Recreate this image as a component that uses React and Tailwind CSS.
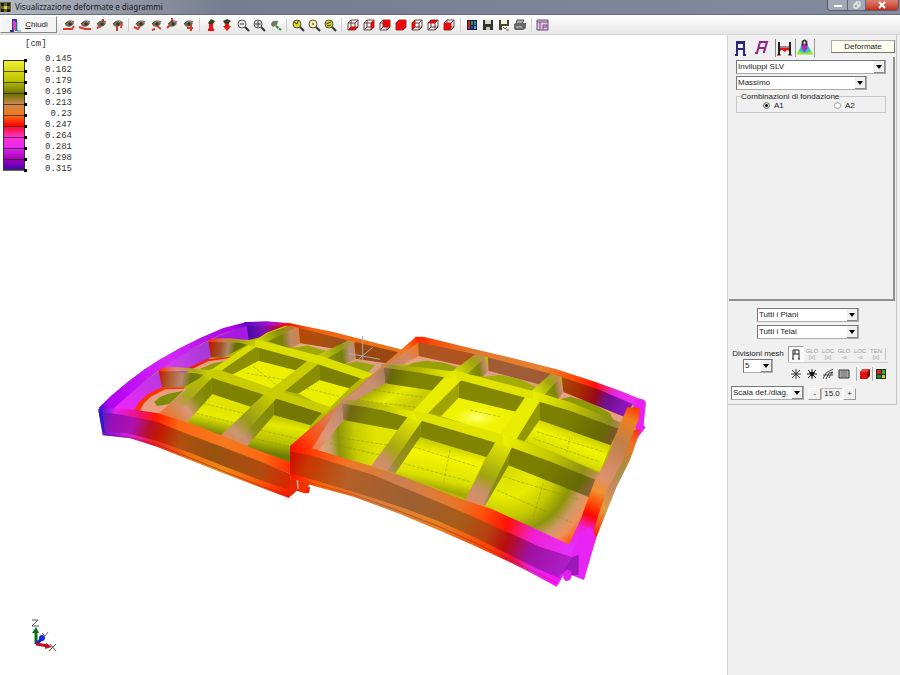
import { useState } from 'react'

const LEGEND = ['0.145', '0.162', '0.179', '0.196', '0.213', '0.23', '0.247', '0.264', '0.281', '0.298', '0.315']

// id, x1, y1, x2, y2, [offset, color]...
const LEFT_GRADIENTS = [
  ['l-edge', 55, 325, 500, 68, [0, '#4a10c8'], [0.07, '#b000f0'], [0.5, '#d428f8'], [0.92, '#a800e8'], [1, '#5a08d0']],
  ['l-front', 60, 350, 630, 530, [0, '#5020c0'], [0.06, '#9410b8'], [0.17, '#b010b0'], [0.25, '#b81030'], [0.31, '#c41800'], [0.42, '#b05010'], [0.6, '#985210'], [0.85, '#b04c10'], [1, '#d82800']],
  ['l-rim', 60, 325, 640, 490, [0, '#4010d8'], [0.08, '#e020f0'], [0.2, '#f01070'], [0.28, '#ff1800'], [0.4, '#ff6810'], [0.65, '#f47a20'], [0.85, '#ff6810'], [1, '#ff2a00']],
  ['l-flange', 60, 400, 630, 590, [0, '#6010e0'], [0.15, '#e020e0'], [0.27, '#f02020'], [0.45, '#f07010'], [0.65, '#f08818'], [0.85, '#ff5008'], [1, '#ff1800']],
  ['l-back', 500, 68, 990, 160, [0, '#6008d0'], [0.15, '#b010d0'], [0.25, '#ff1000'], [0.38, '#f06010'], [1, '#f07818']],
  ['l-d1', 385, 118, 560, 130, [0, '#ff2800'], [0.25, '#d07840'], [0.5, '#a0a010'], [1, '#e4e800']],
  ['l-d2', 235, 205, 410, 215, [0, '#ff2800'], [0.3, '#d89068'], [0.6, '#a8a810'], [1, '#dce000']],
  ['l-w1', 385, 130, 510, 150, [0, '#b81800'], [0.3, '#a05028'], [0.48, '#b08868'], [0.65, '#687000'], [1, '#707800']],
  ['l-w2', 235, 220, 375, 245, [0, '#c01800'], [0.2, '#b05020'], [0.5, '#b88870'], [0.7, '#707808'], [1, '#808400']],
  ['l-u1', 240, 345, 400, 220, [0, '#f07028'], [0.3, '#d09060'], [0.5, '#a8a820'], [0.85, '#b8bc00'], [1, '#d8dc00']],
  ['l-u2', 430, 410, 570, 285, [0, '#e08858'], [0.2, '#c89870'], [0.45, '#989a18'], [1, '#c8cc00']],
  ['l-u1b', 530, 130, 640, 78, [0, '#d8dc00'], [0.6, '#889008'], [1, '#c07838']],
  ['l-u2b', 700, 185, 825, 122, [0, '#e0e400'], [0.65, '#909810'], [1, '#c89068']],
  ['l-f', 400, 310, 380, 400, [0, '#e0e400'], [0.4, '#e8ec00'], [1, '#6e7c08']],
  ['l-f2', 590, 340, 570, 460, [0, '#b8bc00'], [0.3, '#e4e800'], [0.7, '#b8c000'], [1, '#6e7c08']],
  ['l-mag', 240, 200, 380, 160, [0, '#d840f0'], [1, '#a838d8']],
  ['l-mag2', 130, 310, 240, 230, [0, '#e828f8'], [1, '#b838e0']],
  ['l-lw1', 270, 340, 390, 260, [0, '#e07838'], [0.35, '#d89878'], [0.62, '#8c9010'], [1, '#7e8400']],
  ['l-lw2', 440, 400, 575, 330, [0, '#e08858'], [0.3, '#c89078'], [0.5, '#8c9010'], [1, '#848a08']],
  ['l-bw', 505, 90, 620, 80, [0, '#4808a8'], [0.4, '#8010b0'], [0.75, '#b80840'], [1, '#c81000']],
  ['l-bw2', 655, 100, 800, 130, [0, '#b84808'], [0.5, '#a85010'], [1, '#98501c']],
  ['l-p1', 570, 120, 660, 110, [0, '#808808'], [0.4, '#788008'], [0.7, '#c08868'], [1, '#d08050']],
  ['l-p2', 740, 160, 830, 150, [0, '#889008'], [0.5, '#788008'], [0.75, '#b89078'], [1, '#c88860']],
]

const RIGHT_GRADIENTS = [
  ['r-left', 60, 380, 440, 52, [0, '#ff1000'], [0.12, '#ff4810'], [0.3, '#d88050'], [0.7, '#cc8458'], [0.9, '#f07820'], [1, '#ff3000']],
  ['r-front', 60, 420, 905, 740, [0, '#d01000'], [0.06, '#c83800'], [0.2, '#b46028'], [0.42, '#9c6034'], [0.6, '#a85c18'], [0.7, '#b84010'], [0.77, '#b80c10'], [0.85, '#a010a0'], [1, '#b020d0']],
  ['r-rim', 60, 385, 905, 690, [0, '#ff1000'], [0.08, '#ff4000'], [0.2, '#f07828'], [0.38, '#cc8050'], [0.58, '#e87828'], [0.68, '#ff5008'], [0.77, '#ff1008'], [0.86, '#f020d0'], [1, '#e830ff']],
  ['r-flange', 60, 470, 860, 790, [0, '#ff1000'], [0.1, '#ff6000'], [0.3, '#d88040'], [0.55, '#e88020'], [0.74, '#ff4000'], [0.82, '#f01030'], [0.9, '#e820e0'], [1, '#ff10ff']],
  ['r-back', 440, 50, 1125, 240, [0, '#ff2000'], [0.08, '#f85008'], [0.25, '#e07830'], [0.55, '#e88030'], [0.68, '#ff5008'], [0.78, '#ff1008'], [0.87, '#e828e0'], [1, '#f030ff']],
  ['r-right', 1105, 260, 920, 690, [0, '#ff3000'], [0.1, '#f08020'], [0.25, '#c08048'], [0.5, '#dc9070'], [0.6, '#f09030'], [0.68, '#ff5008'], [0.76, '#ff0800'], [0.85, '#f020d0'], [1, '#e030ff']],
  ['r-side', 1110, 320, 940, 740, [0, '#ff2000'], [0.12, '#f07020'], [0.3, '#a89040'], [0.45, '#c88860'], [0.6, '#e0a040'], [0.72, '#f05010'], [0.8, '#ff1010'], [0.88, '#f020e0'], [1, '#e020e8']],
  ['r-d1', 335, 135, 560, 165, [0, '#b88868'], [0.15, '#989820'], [0.5, '#b8bc00'], [1, '#ecf000']],
  ['r-d1b', 790, 225, 1060, 320, [0, '#ecf000'], [0.5, '#b8bc00'], [0.85, '#8c8c20'], [1, '#c08058']],
  ['r-d2', 210, 240, 440, 285, [0, '#cc9070'], [0.2, '#a09828'], [0.5, '#c0c400'], [1, '#ecf000']],
  ['r-d2b', 700, 360, 995, 480, [0, '#ecf000'], [0.5, '#c0c400'], [0.8, '#909010'], [1, '#d09068']],
  ['r-u1', 320, 445, 440, 290, [0, '#d89070'], [0.18, '#c89060'], [0.4, '#a8a810'], [1, '#e8ec00']],
  ['r-u2', 610, 550, 710, 365, [0, '#dc8c68'], [0.22, '#c89068'], [0.42, '#a0a410'], [1, '#e8ec00']],
  ['r-u1b', 555, 165, 645, 100, [0, '#e0e400'], [0.6, '#a0a410'], [1, '#c88858']],
  ['r-u2b', 790, 225, 870, 160, [0, '#e8ec00'], [0.6, '#a0a410'], [1, '#c88858']],
  ['r-m1', 340, 160, 420, 180, [0, '#906850'], [0.3, '#686808'], [1, '#7e8400']],
  ['r-f1', 215, 270, 300, 290, [0, '#a87860'], [0.3, '#706810'], [1, '#7e8400']],
  ['r-m3', 900, 270, 1045, 340, [0, '#7c8000'], [0.7, '#666a04'], [1, '#7c5430']],
  ['r-f3', 830, 420, 975, 510, [0, '#7c7e00'], [0.7, '#666a04'], [1, '#946048']],
  ['r-lf1', 125, 390, 215, 260, [0, '#f07848'], [0.4, '#dc9878'], [1, '#b88870']],
  ['r-lf2', 350, 450, 450, 320, [0, '#b88870'], [0.22, '#989020'], [1, '#848a04']],
  ['r-lf3', 640, 550, 718, 400, [0, '#b88870'], [0.25, '#8c8c18'], [1, '#848a04']],
  ['r-lm1', 245, 240, 345, 160, [0, '#cc9070'], [0.6, '#c89070'], [1, '#a88060']],
  ['r-bb3', 870, 180, 1090, 260, [0, '#a84c10'], [0.3, '#a82800'], [0.5, '#98081c'], [0.65, '#701090'], [1, '#9818c8']],
  ['r-floor1', 145, 375, 320, 360, [0, '#e8a080'], [0.2, '#c8a070'], [0.35, '#8c9408'], [0.65, '#c8cc00'], [1, '#e0e400']],
  ['r-floor2', 500, 350, 470, 500, [0, '#b8bc00'], [0.35, '#f4f600'], [0.8, '#dce000'], [1, '#a4ac00']],
  ['r-floorm1', 340, 190, 390, 270, [0, '#a8ac00'], [0.5, '#e8ec00'], [1, '#c8cc00']],
  ['r-floorm3', 900, 320, 860, 420, [0, '#c4c800'], [0.4, '#f0f400'], [0.8, '#d8dc00'], [1, '#b0b400']],
  ['r-peach', 440, 60, 360, 140, [0, '#f87010'], [0.5, '#d88860'], [1, '#c08868']],
  ['r-b1', 600, 140, 650, 130, [0, '#8c9408'], [0.5, '#7c8408'], [0.85, '#c08868'], [1, '#d09078']],
  ['r-b2', 825, 200, 875, 190, [0, '#8c9408'], [0.5, '#7c8408'], [0.85, '#c08868'], [1, '#d09078']],
]

// [points, fill], painted back to front
const LEFT_FACES = [
  ['55,325 150,240 300,145 420,90 500,68 630,70 990,155 990,300 625,500 200,365', '#b4b800'],
  ['80,328 170,262 310,160 425,102 506,76 508,118 390,174 246,264 165,332', 'url(#l-mag2)'],
  // rear row
  ['395,118 500,76 508,118 450,122', '#a818e0'],
  ['500,76 632,73 565,106 506,120', 'url(#l-bw)'],
  ['655,78 805,120 765,147 660,131', 'url(#l-bw2)'],
  ['640,140 662,130 768,147 735,165', '#e8a888'],
  ['632,146 680,136 738,152 715,170', '#a0a808'],
  ['560,122 655,78 660,130 628,146', 'url(#l-p1)'],
  ['820,122 990,160 990,220 826,178', '#984810'],
  ['780,196 828,176 990,200 990,240 850,216', '#d8a080'],
  ['780,196 830,184 885,196 860,222', '#9aa410'],
  ['732,172 822,122 828,176 785,196', 'url(#l-p2)'],
  // middle row
  ['232,208 385,122 394,172 330,204', 'url(#l-mag)'],
  ['325,204 380,178 455,170 390,214', '#f02000'],
  ['338,206 384,184 450,174 390,218', '#e8a080'],
  ['352,210 400,190 440,182 385,220', '#90980c'],
  ['385,124 512,128 430,174 393,172', 'url(#l-w1)'],
  ['455,224 536,182 655,211 582,276', '#ecf000'],
  ['538,136 692,176 652,212 536,182', '#808400'],
  ['538,136 536,182 455,225 412,212', '#8c9000'],
  ['655,280 718,240 808,264 745,328', '#eaee00'],
  ['717,188 846,232 808,265 718,240', '#7c8000'],
  ['717,188 718,241 655,281 602,270', '#8a8e00'],
  // front row
  ['162,332 176,308 200,285 226,270 250,262 315,262 238,350', '#ff3000'],
  ['180,332 192,310 212,290 256,268 320,266 244,350', '#e8a080'],
  ['222,306 240,292 262,282 310,272 268,312 232,318', '#808c08'],
  ['236,212 380,222 312,262 246,262', 'url(#l-w2)'],
  ['310,360 396,282 512,320 425,412', 'url(#l-f)'],
  ['390,226 552,284 512,320 397,282', '#7e8200'],
  ['390,226 397,283 322,366 262,350', 'url(#l-lw1)'],
  ['490,440 580,344 692,376 640,490', 'url(#l-f2)'],
  ['580,288 730,334 692,376 581,345', '#747800'],
  ['580,288 581,346 500,440 462,420', 'url(#l-lw2)'],
  // rib tops
  ['230,346 274,356 404,226 540,132 648,84 630,72 560,98 505,135 370,225', 'url(#l-u1)'],
  ['505,136 545,132 648,84 630,76 562,100', 'url(#l-u1b)'],
  ['420,408 468,428 594,290 722,186 690,176 552,284', 'url(#l-u2)'],
  ['690,178 726,184 832,124 812,118 745,150', 'url(#l-u2b)'],
  ['385,116 450,115 540,124 530,142 480,128 388,126', 'url(#l-d1)'],
  ['525,122 545,122 735,172 880,222 850,238 700,188 525,140', '#dce000'],
  ['232,202 300,202 412,212 395,232 330,214 236,214', 'url(#l-d2)'],
  ['390,208 420,210 600,274 755,322 735,342 575,292 385,230', '#c8cc00'],
  // rims
  ['55,325 95,286 140,248 190,210 240,178 300,144 360,114 430,84 500,66 512,74 425,102 370,128 310,162 230,216 170,264 100,326', 'url(#l-edge)'],
  ['492,66 560,64 630,70 760,96 990,155 990,165 800,120 632,78 500,76', 'url(#l-back)'],
  ['55,328 65,322 170,330 235,340 330,370 425,406 510,442 640,490 640,525 530,482 430,444 330,407 230,367 130,347 62,340', 'url(#l-rim)'],
  ['55,332 65,337 130,345 230,365 330,405 430,442 530,480 632,522 632,574 530,540 430,502 330,462 230,424 140,404 68,396', 'url(#l-front)'],
  ['66,394 140,400 230,422 330,458 430,498 530,536 632,572 640,570 690,560 688,578 676,580 650,572 626,594 530,558 430,520 330,480 230,440 150,415 68,406', 'url(#l-flange)'],
  ['68,402 150,410 230,433 330,472 430,512 530,551 626,586 626,589 530,554 430,515 330,475 230,436 150,413 68,405', '#7a1c1880'],
  ['55,328 68,336 74,398 66,394 60,360', '#3018c8'],
]

const RIGHT_FACES = [
  ['60,380 440,52 1125,240 905,700 300,500', '#b8bc00'],
  // rear row
  ['345,136 444,70 446,110 400,134', 'url(#r-peach)'],
  ['400,132 446,108 572,134 545,160', '#e8a080'],
  ['405,140 430,128 470,122 520,128 560,140 545,166', '#98a008'],
  ['444,62 618,102 572,136 446,108', '#ae5420'],
  ['638,168 656,150 812,192 790,222', '#dca080'],
  ['638,172 690,164 750,178 800,202 785,226', '#a4ac08'],
  ['654,104 848,158 812,194 655,152', '#a05c34'],
  ['580,162 642,104 656,152 638,170', 'url(#r-b1)'],
  ['862,238 880,214 1064,292 1045,322', '#e8a080'],
  ['862,240 900,230 960,246 1020,280 1040,322', '#8c9808'],
  ['874,166 1096,242 1062,290 880,216', 'url(#r-bb3)'],
  ['812,228 868,164 880,216 864,240', 'url(#r-b2)'],
  // middle row
  ['240,246 345,190 492,212 442,284', 'url(#r-floorm1)'],
  ['340,138 532,168 492,212 345,190', 'url(#r-m1)'],
  ['340,138 346,190 250,246 216,242', 'url(#r-lm1)'],
  ['512,288 565,232 742,276 706,350', '#eef200'],
  ['568,174 780,230 742,276 565,233', '#848800'],
  ['568,174 565,234 514,288 474,278', '#a0a400'],
  ['762,364 808,298 1022,374 990,456', 'url(#r-floorm3)'],
  ['808,238 1048,322 1022,376 808,300', 'url(#r-m3)'],
  ['808,238 808,301 764,364 730,352', '#949800'],
  // front row
  ['130,390 220,300 382,330 312,440', 'url(#r-floor1)'],
  ['214,246 420,288 382,330 220,300', 'url(#r-f1)'],
  ['214,246 220,301 145,392 95,392', 'url(#r-lf1)'],
  ['374,460 450,350 648,410 588,536', 'url(#r-floor2)'],
  ['454,292 688,358 648,411 450,351', '#808400'],
  ['454,292 450,352 376,460 346,452', 'url(#r-lf2)'],
  ['642,562 716,434 958,530 897,680', 'url(#r-floor3)'],
  ['722,372 992,482 958,532 715,436', 'url(#r-f3)'],
  ['722,372 716,436 645,558 628,552', 'url(#r-lf3)'],
  // rib tops
  ['303,438 352,452 466,288 590,164 534,160 412,292', 'url(#r-u1)'],
  ['536,162 590,164 656,102 624,98', 'url(#r-u1b)'],
  ['584,542 636,562 734,366 818,230 772,222 680,358', 'url(#r-u2)'],
  ['772,224 818,230 880,162 848,156', 'url(#r-u2b)'],
  ['332,132 450,142 580,158 565,180 450,158 336,142', 'url(#r-d1)'],
  ['550,154 580,158 815,220 800,242 560,178', '#e0e400'],
  ['790,214 900,246 1054,308 1046,326 900,272 790,240', 'url(#r-d1b)'],
  ['208,236 330,250 460,282 440,300 330,268 212,250', 'url(#r-d2)'],
  ['430,274 470,280 730,352 710,378 440,298', '#e0e400'],
  ['700,344 850,396 1002,466 992,486 850,428 700,374', 'url(#r-d2b)'],
  // rims
  ['60,378 436,52 448,66 345,140 214,246 118,398 60,394', 'url(#r-left)'],
  ['434,50 460,50 600,84 730,115 860,148 970,184 1050,212 1118,240 1096,256 990,210 860,166 630,106 444,66', 'url(#r-back)'],
  ['1092,240 1118,238 1128,247 1121,316 1127,322 1104,352 1085,290', '#e820f0'],
  ['1090,330 1108,326 1104,352 1080,420 1040,500 980,650 942,776 920,770 960,600', 'url(#r-side)'],
  ['1072,262 1110,264 1106,300 1085,350 1050,440 1015,500 985,585 955,690 900,700 895,678 935,590 975,480 1010,420 1035,350', 'url(#r-right)'],
  ['60,380 135,388 300,437 400,470 510,512 590,543 660,565 760,610 900,675 912,716 810,682 710,637 610,592 510,552 310,474 60,402', 'url(#r-rim)'],
  ['60,394 120,406 310,465 510,548 610,590 710,635 810,680 908,712 900,750 865,780 810,757 710,707 610,657 510,610 390,566 250,520 110,482 60,464', 'url(#r-front)'],
  ['60,460 110,474 250,515 390,560 510,605 610,650 710,700 810,750 872,776 860,800 785,760 710,722 610,676 510,632 390,582 250,530 110,492 62,474', 'url(#r-flange)'],
  ['110,484 250,523 390,572 510,619 610,664 710,712 862,788 862,791 710,716 610,668 510,623 390,576 250,526 110,487', '#8a302070'],
  ['905,700 935,640 960,620 978,650 942,780 906,766 900,780 886,784 880,766 862,798 872,764 900,745', '#e824f4'],
  ['905,712 926,704 926,764 905,766 892,750 876,760', '#9c18b8'],
  ['880,758 890,750 904,752 904,772 890,782 880,776', '#e020f0'],
  ['62,472 80,480 84,512 72,512 72,520 58,528 50,520', '#e82800'],
  ['84,482 118,492 104,520 86,512', '#f03000'],
]

function Gradients({ list }) {
  return list.map(([id, x1, y1, x2, y2, ...stops]) => (
    <linearGradient key={id} id={id} gradientUnits="userSpaceOnUse" x1={x1} y1={y1} x2={x2} y2={y2}>
      {stops.map(([offset, color]) => <stop key={offset} offset={offset} stopColor={color} />)}
    </linearGradient>
  ))
}

function Faces({ list }) {
  return list.map(([points, fill], i) => <polygon key={i} points={points} fill={fill} />)
}

function SlabModel() {
  return (
    <svg viewBox="90 312 566 284" className="ml-[90px] w-[566px] shrink-0" role="img" aria-label="Platea deformata">
      <defs>
        <Gradients list={LEFT_GRADIENTS} />
        <Gradients list={RIGHT_GRADIENTS} />
        <radialGradient id="glow">
          <stop offset="0" stopColor="#ffff80" />
          <stop offset="1" stopColor="#ffff30" stopOpacity="0" />
        </radialGradient>
        {/* yellow centre fading to the hot corner */}
        <radialGradient id="r-floor3" gradientUnits="userSpaceOnUse" cx="710" cy="440" r="300">
          <stop offset="0" stopColor="#d8dc00" />
          <stop offset="0.3" stopColor="#e8ec00" />
          <stop offset="0.5" stopColor="#c4c800" />
          <stop offset="0.66" stopColor="#8c9408" />
          <stop offset="0.78" stopColor="#d09868" />
          <stop offset="0.88" stopColor="#f09058" />
          <stop offset="1" stopColor="#ff5008" />
        </radialGradient>
      </defs>
      <g transform="translate(80 300) scale(0.33333)">
        <Faces list={LEFT_FACES} />
        <g fill="none" stroke="#8c9000" strokeWidth="1.5" strokeDasharray="9 4">
          <path d="M350 340 470 370M370 310 490 340M500 220 620 240M520 200 590 255M680 265 780 290M540 390 670 420M520 415 650 445" />
        </g>
        <path d="M848 108V180M805 160 900 178M878 142 835 178" stroke="#a8a8a8" strokeWidth="3" fill="none" />
      </g>
      <g transform="translate(270 320) scale(0.33333)">
        <Faces list={RIGHT_FACES} />
        <ellipse cx="620" cy="292" rx="75" ry="34" fill="url(#glow)" />
        <g fill="none" stroke="#8c9000" strokeWidth="1.5" strokeDasharray="10 4">
          <path d="M190 350 350 375M180 370 330 405M260 240 440 262M310 210 460 232M600 270 690 290M430 380 620 440M400 430 600 485M800 335 1000 395M790 355 985 425M700 470 930 540M680 510 910 610" />
          <path d="M540 390 520 490M820 490 790 590M900 350 890 400" />
        </g>
      </g>
    </svg>
  )
}

function AxisTriad() {
  return (
    <svg viewBox="0 0 32 36" className="mb-[21px] ml-7 w-8 shrink-0" fill="none" aria-hidden="true">
      <path d="M4 2H10L4 8H11" stroke="#555" />
      <path d="M8 26V13" stroke="#087018" strokeWidth="3" />
      <path d="M4 15 8 9 11 15Z" fill="#087018" />
      <path d="M8 26 15 20" stroke="#1020d0" strokeWidth="3" />
      <circle cx="14" cy="20" r="3" fill="#1828e8" />
      <path d="M14 15 17 18 20 14" stroke="#777" />
      <path d="M8 26 20 28" stroke="#c01020" strokeWidth="3" />
      <path d="M18 25 24 29 17 31Z" fill="#c01020" />
      <path d="M22 26 28 33M28 26 21 33" stroke="#555" />
    </svg>
  )
}

function ColorLegend() {
  return (
    <div className="flex shrink-0 flex-col gap-1 pt-1 pl-[3px] font-['Liberation_Mono',monospace] text-[9px] leading-[11px] text-[#333]">
      <div className="pl-[22px]">[cm]</div>
      <div className="flex">
        <svg viewBox="0 0 26 114" className="mt-1 h-[114px] w-[26px]" aria-hidden="true">
          <defs>
            <linearGradient id="scale" x1="0" y1="0" x2="0" y2="1">
              <stop offset="0" stopColor="#f0f030" />
              <stop offset="0.18" stopColor="#c0c400" />
              <stop offset="0.31" stopColor="#6c7000" />
              <stop offset="0.4" stopColor="#d08850" />
              <stop offset="0.5" stopColor="#f07818" />
              <stop offset="0.59" stopColor="#ff0800" />
              <stop offset="0.7" stopColor="#ff30d0" />
              <stop offset="0.79" stopColor="#e828f0" />
              <stop offset="0.9" stopColor="#a800b8" />
              <stop offset="1" stopColor="#4800b8" />
            </linearGradient>
          </defs>
          <rect x="0.5" y="2.5" width="21" height="109" fill="url(#scale)" stroke="#333" />
          {LEGEND.map((v, i) => (
            <g key={v}>
              <path d={`M0 ${2.5 + i * 11}H22`} stroke="#222" strokeOpacity="0.7" />
              <rect x="21" y={1 + i * 11} width="3" height="3" fill="#000" />
            </g>
          ))}
        </svg>
        <ul className="w-[43px] text-right">
          {LEGEND.map((v) => <li key={v}>{v}</li>)}
        </ul>
      </div>
    </div>
  )
}

function Eye({ red }) {
  return (
    <>
      <path d={red} stroke="#e03828" strokeWidth="2" fill="none" />
      <path d="M4 6C7 3 10 3 13 5C12 8 8 10 5 8Z" fill="#7c6450" />
      <path d="M4 6C6 3 10 2 13 4" stroke="#4c4434" fill="none" />
      <circle cx="9" cy="6" r="1.5" fill="#203828" />
    </>
  )
}

function Magnifier({ fill, mark }) {
  return (
    <>
      <circle cx="7" cy="6" r="4" fill={fill} stroke="#555" />
      <path d="M10 9 14 13" stroke="#333" strokeWidth="2" />
      <path d={mark} stroke="#333" fill="none" />
    </>
  )
}

function Cube({ face }) {
  return (
    <>
      <path d="M3 5H10V12H3ZM3 5 6 2H13L10 5M13 2V9L10 12M6 2V9H13M6 9 3 12" stroke="#6a4444" fill="none" />
      <path d={face} fill="#e80808" />
    </>
  )
}

const TOOL_GROUPS = [
  [
    ['Vista 1', <Eye red="M2 11H11L13 8" />],
    ['Vista 2', <Eye red="M2 9 8 11H14" />],
    ['Vista 3', <Eye red="M10 1V5M4 10 8 8" />],
    ['Vista 4', <Eye red="M8 8V13M13 4 12 10" />],
  ],
  [
    ['Ruota 1', <Eye red="M2 9 6 11 8 8" />],
    ['Ruota 2', <Eye red="M9 8 13 11M4 12 7 11" />],
    ['Ruota 3', <Eye red="M8 0V4M3 10 6 7" />],
    ['Ruota 4', <Eye red="M11 7V13M7 10H13" />],
  ],
  [
    ['Alza', <><path d="M5 13H11V11L10 10V5H6V10L5 11Z" fill="#f01010" /><path d="M5 5 8 1 12 3 10 6H6Z" fill="#413c28" /></>],
    ['Abbassa', <><path d="M6 4H10V8H12L8 13 4 8H6Z" fill="#f01010" /><path d="M4 3 8 1 12 3 9 6H6Z" fill="#413c28" /></>],
    ['Zoom indietro', <Magnifier fill="#eee" mark="M5 6H9" />],
    ['Zoom avanti', <Magnifier fill="#eee" mark="M4 6H10M7 3V9" />],
    ['Sposta', <><path d="M4 7C4 3 7 2 11 3L10 7 6 9Z" fill="#658058" /><path d="M9 8 14 12" stroke="#208838" strokeWidth="2" strokeDasharray="3 1" /></>],
  ],
  [
    ['Zoom finestra', <Magnifier fill="#d8e010" mark="M4 4 7 6 8 3" />],
    ['Zoom precedente', <Magnifier fill="#f4f4a0" mark="M6 6H8" />],
    ['Zoom tutto', <Magnifier fill="#d8e010" mark="M4 6 9 4M5 8 9 7" />],
  ],
  [
    ['Faccia inferiore', <Cube face="M3 12 6 9H13L10 12Z" />],
    ['Faccia destra', <Cube face="M10 5 13 2V9L10 12Z" />],
    ['Faccia posteriore', <Cube face="M6 2H13V9H6Z" />],
    ['Solido', <Cube face="M3 5 6 2H13V9L10 12H3Z" />],
    ['Faccia sinistra', <Cube face="M3 5 6 2V9L3 12Z" />],
    ['Faccia superiore', <Cube face="M3 5 6 2H13L10 5Z" />],
    ['Faccia anteriore', <Cube face="M3 5H10V12H3Z" />],
  ],
  [
    ['Colori', <><path d="M3 2H13V12H3Z" fill="#181838" /><path d="M4 3H6V11H4Z" fill="#d02828" /><path d="M7 3H9V7H7Z" fill="#20a040" /><path d="M10 3H12V7H10Z" fill="#2880e0" /><path d="M7 8H9V11H7Z" fill="#3038c0" /><path d="M10 8H12V11H10Z" fill="#38b8c8" /></>],
    ['Salva', <><path d="M3 2H13V12H3Z" fill="#303428" /><path d="M5 2H11V6H5Z" fill="#d8dcc8" /><path d="M6 9H10V12H6Z" fill="#c8c8c8" /></>],
    ['Esporta', <><path d="M3 2H13V12H3Z" fill="#484430" /><path d="M5 2H11V6H5Z" fill="#f4f4e0" /><path d="M6 8H14V13H6Z" fill="#f0f0f0" /><path d="M7 9 9 11 11 9M10 12H13" stroke="#605840" fill="none" /></>],
    ['Stampa', <><path d="M5 2H12L10 6H4Z" fill="#aaa" stroke="#555" /><path d="M2 6 4 5H14V10L11 12H3L2 10Z" fill="#666" /><path d="M4 9H10" stroke="#ddd" /></>],
  ],
  [
    ['Proprietà', <><path d="M2 2H13V12H2Z" fill="#dcc8e0" stroke="#684870" /><path d="M2 4H13M5 4V12M8 12V7H12V9H8" stroke="#804888" fill="none" /></>],
  ],
]

function Toolbar() {
  return (
    <div className="flex h-5 items-center border-b border-[#d8d8d8] bg-gradient-to-b from-white to-[#e6e6e6]">
      <button className="flex h-[17px] w-[57px] items-center justify-center gap-1 border border-t-white border-r-[#888] border-b-[#888] border-l-white bg-[#f4f4f4] text-[8px]">
        <svg viewBox="0 0 12 14" className="w-3" fill="none" aria-hidden="true">
          <path d="M1 13H4V2H7V13" stroke="#2838a0" strokeWidth="2" />
          <path d="M4 2 7 4V13L4 11Z" fill="#e040b0" />
          <path d="M8 4V13H12" stroke="#20a8b0" />
        </svg>
        <span><u>C</u>hiudi</span>
      </button>
      <div className="flex pl-px">
        {TOOL_GROUPS.map((group, i) => (
          <div key={i} className="flex border-r border-[#d0d0d0] px-[3px] last:border-r-0">
            {group.map(([label, icon]) => (
              <button key={label} aria-label={label} title={label} className="w-4 px-px">
                <svg viewBox="1 0 14 14" className="w-[14px]">{icon}</svg>
              </button>
            ))}
          </div>
        ))}
      </div>
    </div>
  )
}

function TitleBar() {
  return (
    <header className="flex h-[15px] items-start justify-between border-b border-[#666c7c] bg-gradient-to-r from-[#b4b8c2] via-[#777d91] via-25% to-[#858b9f]">
      <div className="flex items-center gap-1">
        <svg viewBox="0 0 11 12" className="w-[11px]" aria-hidden="true">
          <path d="M0 1H11V11H0Z" fill="#66683c" />
          <path d="M1 2H4V5H1ZM7 2H10V5H7ZM1 8H4V11H1ZM7 8H10V11H7Z" fill="#1c1c10" />
          <path d="M4 5H7V8H4Z" fill="#e0d830" />
        </svg>
        <h1 className="font-['Noto_Sans','Open_Sans',sans-serif] text-[8px] leading-[14px] text-[#181818]">Visualizzazione deformate e diagrammi</h1>
      </div>
      <div className="mr-px flex h-[11px] overflow-hidden rounded-b border border-t-0 border-[#555b6b] text-white">
        <button aria-label="Riduci" className="flex w-5 items-center justify-center border-r border-[#606678] bg-[#a4a8b6]">
          <svg viewBox="0 0 8 6" className="w-2"><path d="M0 3H8V5H0Z" fill="#fff" /></svg>
        </button>
        <button aria-label="Ripristina" className="flex w-[18px] items-center justify-center border-r border-[#606678] bg-[#a4a8b6]">
          <svg viewBox="0 0 8 8" className="w-2" fill="none" stroke="#fff"><path d="M1 3H5V7H1ZM3 3V1H7V5H5" /></svg>
        </button>
        <button aria-label="Chiudi finestra" className="flex w-8 items-center justify-center bg-gradient-to-b from-[#d88070] to-[#c42c1c]">
          <svg viewBox="0 0 8 8" className="w-2" stroke="#fff" strokeWidth="2"><path d="M1 1 7 7M7 1 1 7" /></svg>
        </button>
      </div>
    </header>
  )
}

function Select({ label, value, className }) {
  return (
    <div className={`relative ${className}`}>
      <select aria-label={label} defaultValue={value} className="block h-[14px] w-full appearance-none border border-t-[#777] border-r-[#aaa] border-b-[#aaa] border-l-[#777] bg-white pl-px text-[8px] leading-3">
        <option>{value}</option>
      </select>
      <span className="pointer-events-none absolute inset-y-px right-px flex w-[11px] items-center justify-center border-r border-b border-[#888] bg-[#f0f0f0]">
        <svg viewBox="0 0 6 4" className="w-[6px]"><path d="M0 0H6L3 4Z" fill="#000" /></svg>
      </span>
    </div>
  )
}

const MODES = [['GLO', '[x]'], ['LOC', '[x]'], ['GLO', '-u'], ['LOC', '-u'], ['TEN', '[x]']]

const VIEW_ICONS = [
  ['Nodi', <path d="M7 2V12M2 7H12M3 3 11 11M11 3 3 11" stroke="#333" fill="none" />],
  ['Vincoli', <><path d="M7 2V12M2 7H12M3 3 11 11M11 3 3 11" stroke="#111" fill="none" /><path d="M4 5H10L7 10Z" fill="#111" /></>],
  ['Aste', <path d="M2 12 5 6 12 2M5 12 8 6 12 5M8 11 11 5V9M2 8H9" stroke="#444" fill="none" />],
  ['Shell', <><path d="M2 3H12V11H2Z" fill="#aaa" stroke="#333" /><path d="M4 5H10M4 7H10M4 9H10" stroke="#777" /></>],
]

function TabIcons() {
  return (
    <div className="flex items-center">
      <button aria-label="Telaio" className="w-5">
        <svg viewBox="0 0 20 18" className="w-5" fill="none" stroke="#282878" strokeWidth="2"><path d="M2 16V4H9V16M3 10H9M0 16H3M8 16H11M1 3H10" /></svg>
      </button>
      <button aria-label="Telaio deformato" className="w-5">
        <svg viewBox="0 0 20 18" className="w-5" fill="none" stroke="#902890" strokeWidth="2"><path d="M2 14 5 3H12L9 13M4 9H11M0 14H3M8 13H10" /></svg>
      </button>
      <button aria-label="Sollecitazioni" className="w-5 border-l border-[#888]">
        <svg viewBox="0 0 19 18" className="w-[19px]" fill="none"><path d="M3 9H14V12L11 11 9 13 6 11 3 12Z" fill="#e01818" /><path d="M3 3V16M14 3V16" stroke="#202020" strokeWidth="2" /><path d="M1 16H5M12 16H16M3 8H14" stroke="#502020" /></svg>
      </button>
      <button aria-label="Mappa colori" className="w-5 border-x border-[#999]">
        <svg viewBox="0 0 19 18" className="w-[18px]" fill="none"><path d="M1 16 6 6H12L18 16Z" fill="#40e048" /><path d="M4 13 6 6H12L15 13 9 16Z" fill="#20c8d8" /><path d="M1 16H18L16 13 9 15 3 13Z" fill="#a8e020" /><path d="M6 5H12V10L9 14 6 10Z" fill="#b828c8" /><path d="M7 7V3Q9 0 11 3V7" stroke="#333" strokeWidth="2" /></svg>
      </button>
    </div>
  )
}

function Sidebar() {
  const [combo, setCombo] = useState('A1')
  const [scale, setScale] = useState(15)

  return (
    <aside className="w-[173px] shrink-0 border-l border-[#d0d0d0] bg-[#f0f0f0] pr-[3px]">
      <div className="border-r border-b border-[#c4c4c4]">
        <div className="flex items-center justify-between pt-1 pr-px pl-[7px]">
          <TabIcons />
          <button className="mb-1 h-[13px] w-16 border border-t-[#aaa] border-r-[#777] border-b-[#777] border-l-[#aaa] bg-[#fffff0] text-[8px] leading-[11px]">Deformate</button>
        </div>

        <div className="mr-px ml-px h-[244px] space-y-[2px] border-r-2 border-b-2 border-[#909090] pt-[3px] pr-[7px] pl-[7px]">
          <Select label="Inviluppo" value="Inviluppi SLV" className="w-full" />
          <Select label="Valore" value="Massimo" className="w-[131px]" />
          <fieldset className="h-[21px] min-w-0 border border-[#c8c8c8] px-1">
            <legend className="text-[8px] leading-[9px]">Combinazioni di fondazione</legend>
            <div className="flex pl-[22px]">
              {['A1', 'A2'].map((name) => (
                <label key={name} className="flex w-[71px] shrink-0 items-center gap-1 text-[8px] leading-[9px]">
                  <input
                    type="radio"
                    name="combo"
                    checked={combo === name}
                    onChange={() => setCombo(name)}
                    className="size-[7px] appearance-none rounded-full border border-[#999] bg-white checked:bg-black checked:shadow-[inset_0_0_0_1px_white]"
                  />
                  {name}
                </label>
              ))}
            </div>
          </fieldset>
        </div>

        <div className="flex flex-col items-center gap-[3px] pt-[7px] pr-2">
          <Select label="Piani" value="Tutti i Piani" className="w-[102px]" />
          <Select label="Telai" value="Tutti i Telai" className="w-[102px]" />
        </div>

        <div className="flex gap-[5px] pt-[6px] pl-[5px]">
          <div className="flex w-[50px] flex-col items-center gap-px pt-1">
            <span className="text-[8px] leading-[9px] whitespace-nowrap">Divisioni mesh</span>
            <Select label="Divisioni mesh" value="5" className="w-[30px]" />
          </div>
          <div>
            <div className="flex h-[18px] items-center border-b border-[#c8c8c8]">
              <button aria-label="Deformata" className="flex h-4 w-4 justify-center border border-t-[#999] border-r-white border-b-white border-l-[#999] bg-[#f8f8f8]">
                <svg viewBox="0 0 12 14" className="w-3" fill="none" stroke="#222"><path d="M3 12V3H9V12M3 7H9M2 12H4M8 12H10M5 3V7" /></svg>
              </button>
              {MODES.map(([top, bottom], i) => (
                <button key={i} className="w-4 text-center text-[6px] leading-[6px] text-[#999]">
                  {top}<br />{bottom}
                </button>
              ))}
              <span className="ml-px h-3 w-px bg-[#c0c0c0]" />
            </div>
            <div className="flex items-center pt-1">
              {VIEW_ICONS.map(([label, icon]) => (
                <button key={label} aria-label={label} className="w-4 px-px">
                  <svg viewBox="0 0 14 14" className="w-[14px]">{icon}</svg>
                </button>
              ))}
              <button aria-label="Solido" className="ml-1 flex w-4 justify-center border-l border-[#b0b0b0]">
                <svg viewBox="0 0 14 14" className="w-[14px]"><path d="M2 5 5 2H12V9L9 12H2Z" fill="#8c0c0c" /><path d="M2 5H9V12H2Z" fill="#e01010" /><path d="M2 5 5 2H12L9 5Z" fill="#f04040" /></svg>
              </button>
              <button aria-label="Mappa" className="flex w-4 justify-center border-l border-[#b0b0b0]">
                <svg viewBox="0 0 14 14" className="w-[14px]"><path d="M2 2H12V12H2Z" fill="#203018" /><path d="M3 3H7V7H3Z" fill="#d82020" /><path d="M8 3H11V7H8Z" fill="#28b838" /><path d="M3 8H7V11H3Z" fill="#208830" /><path d="M8 8H11V11H8Z" fill="#e0c828" /></svg>
              </button>
            </div>
          </div>
        </div>

        <div className="flex items-end pt-[5px] pb-1 pl-[3px]">
          <Select label="Scala" value="Scala def./diag." className="w-[73px]" />
          <button aria-label="Riduci scala" onClick={() => setScale(scale - 1)} className="ml-1 h-3 w-[13px] border border-t-white border-r-[#999] border-b-[#999] border-l-white text-[8px] leading-[10px]">-</button>
          <output className="h-3 w-[22px] border border-t-[#bbb] border-r-white border-b-white border-l-[#bbb] text-center text-[8px] leading-[10px]">{scale.toFixed(1)}</output>
          <button aria-label="Aumenta scala" onClick={() => setScale(scale + 1)} className="h-3 w-[13px] border border-t-white border-r-[#999] border-b-[#999] border-l-white text-[8px] leading-[10px]">+</button>
        </div>
      </div>
    </aside>
  )
}

export default function App() {
  return (
    <div className="flex min-h-screen flex-col bg-[#f0f0f0] font-['Liberation_Sans',Arial,sans-serif] text-[#222]">
      <TitleBar />
      <Toolbar />
      <div className="flex flex-1">
        <main className="flex min-w-0 flex-1 flex-col justify-between overflow-hidden bg-white">
          <ColorLegend />
          <div className="flex flex-col gap-[22px]">
            <SlabModel />
            <AxisTriad />
          </div>
        </main>
        <Sidebar />
      </div>
    </div>
  )
}
